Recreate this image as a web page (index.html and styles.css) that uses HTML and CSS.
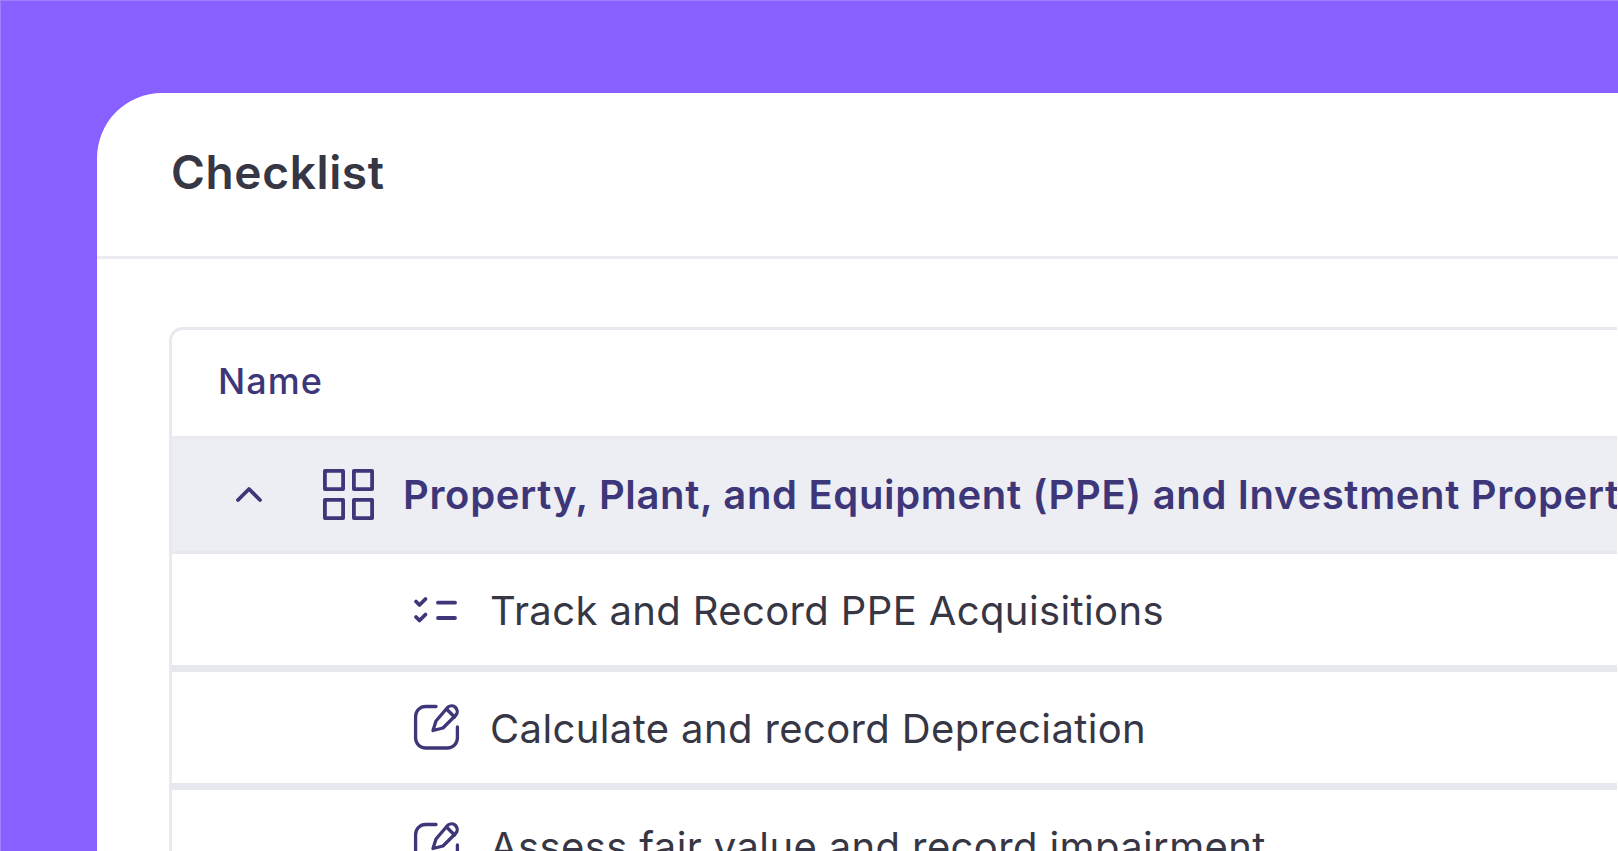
FILE: index.html
```html
<!DOCTYPE html>
<html lang="en">
<head>
<meta charset="utf-8">
<title>Checklist</title>
<link rel="stylesheet" href="styles.css">
</head>
<body>
<main class="card">
  <header class="card-head"><h1 class="title">Checklist</h1></header>
  <section class="table-wrap">
    <div class="table">
      <div class="row-head">Name</div>
      <div class="row-group">
        <svg class="chevron" viewBox="0 0 26 16" fill="none"><path d="M2 14 13 3l11 11" stroke="#3D3779" stroke-width="3.8" stroke-linecap="round" stroke-linejoin="round"/></svg>
        <svg class="grid-icon" viewBox="0 0 51 51" fill="none" stroke="#3D3779" stroke-width="3.8" stroke-linejoin="round"><rect x="1.900" y="1.900" width="18.200" height="18.200"/><rect x="30.900" y="1.900" width="18.200" height="18.200"/><rect x="1.900" y="30.900" width="18.200" height="18.200"/><rect x="30.900" y="30.900" width="18.200" height="18.200"/></svg>
        <span class="group-name">Property, Plant, and Equipment (PPE) and Investment Property</span>
      </div>
      <div class="row-item">
        <svg class="list-icon" viewBox="0 0 46 28" fill="none" stroke="#3D3779" stroke-width="3.8" stroke-linecap="round" stroke-linejoin="round"><path d="M3 5.500l3.500 3.500 6-6"/><path d="M3 21l3.500 3.500 6-6"/><path d="M25 6.700h17"/><path d="M25 22h17"/></svg>
        <span class="item-name">Track and Record PPE Acquisitions</span>
      </div>
      <div class="row-item">
        <svg class="edit-icon" viewBox="0 0 48 48" fill="none" stroke="#3D3779" stroke-width="3.300" stroke-linecap="round" stroke-linejoin="round"><path d="M23 2.500H12.600a10 10 0 0 0-10 10V34a10 10 0 0 0 10 10h21.800a10 10 0 0 0 10-10V23"/><path d="M20 26.500l3-9.500L35 3A5.700 5.700 0 0 1 43 11L30 24z"/><path d="M33.500 5l8 8"/></svg>
        <span class="item-name">Calculate and record Depreciation</span>
      </div>
      <div class="row-item">
        <svg class="edit-icon" viewBox="0 0 48 48" fill="none" stroke="#3D3779" stroke-width="3.300" stroke-linecap="round" stroke-linejoin="round"><path d="M23 2.500H12.600a10 10 0 0 0-10 10V34a10 10 0 0 0 10 10h21.800a10 10 0 0 0 10-10V23"/><path d="M20 26.500l3-9.500L35 3A5.700 5.700 0 0 1 43 11L30 24z"/><path d="M33.500 5l8 8"/></svg>
        <span class="item-name">Assess fair value and record impairment</span>
      </div>
    </div>
  </section>
</main>
</body>
</html>
```

FILE: styles.css
```css
* { box-sizing: border-box; }
html, body { margin: 0; height: 851px; overflow: hidden; }
body {
  background: #8760FF;
  border-top: 1px solid #9E80FF;
  border-left: 1px solid #9E80FF;
  padding: 92px 0 0 96px;
  font-family: Inter, "Liberation Sans", sans-serif;
}
.card {
  background: #fff;
  border-top-left-radius: 65px;
  width: 1521px;
  height: 758px;
  overflow: hidden;
}
.card-head {
  height: 166px;
  border-bottom: 3px solid #ECECF2;
  padding-left: 74px;
  display: flex;
  align-items: center;
}
.title {
  margin: 0;
  font-size: 46px;
  font-weight: 600;
  letter-spacing: 0.65px;
  color: #373644;
  position: relative;
  top: -3px;
}
.table-wrap { padding: 68px 1px 0 72px; }
.table {
  border: 3px solid #E9E9F0;
  border-right: 0;
  border-bottom: 0;
  border-top-left-radius: 14px;
}
.row-head {
  height: 109px;
  padding: 0 0 4px 46px;
  display: flex;
  align-items: center;
  font-size: 36px;
  font-weight: 500;
  letter-spacing: 1px;
  color: #3D3779;
  border-bottom: 3px solid #E9E9F0;
}
.row-group {
  height: 115px;
  padding-bottom: 2px;
  background: #EDEEF4;
  border-bottom: 3px solid #E8E8EF;
  display: flex;
  align-items: center;
  white-space: nowrap;
  overflow: hidden;
}
.chevron { width: 26px; height: 16px; margin-left: 64px; flex: none; }
.grid-icon { width: 51px; height: 51px; margin-left: 61px; flex: none; }
.group-name {
  margin-left: 29px;
  font-size: 40px;
  font-weight: 600;
  letter-spacing: 0.66px;
  color: #3D3779;
}
.row-item {
  height: 118px;
  border-bottom: 7px solid #E7E8EE;
  display: flex;
  align-items: center;
  padding-left: 241px;
  white-space: nowrap;
}
.list-icon { width: 46px; height: 28px; flex: none; margin-right: 31px; }
.edit-icon { width: 48px; height: 48px; flex: none; margin-right: 29px; }
.item-name { font-size: 40px; letter-spacing: 0.38px; color: #373644; position: relative; top: 1px; }
```
